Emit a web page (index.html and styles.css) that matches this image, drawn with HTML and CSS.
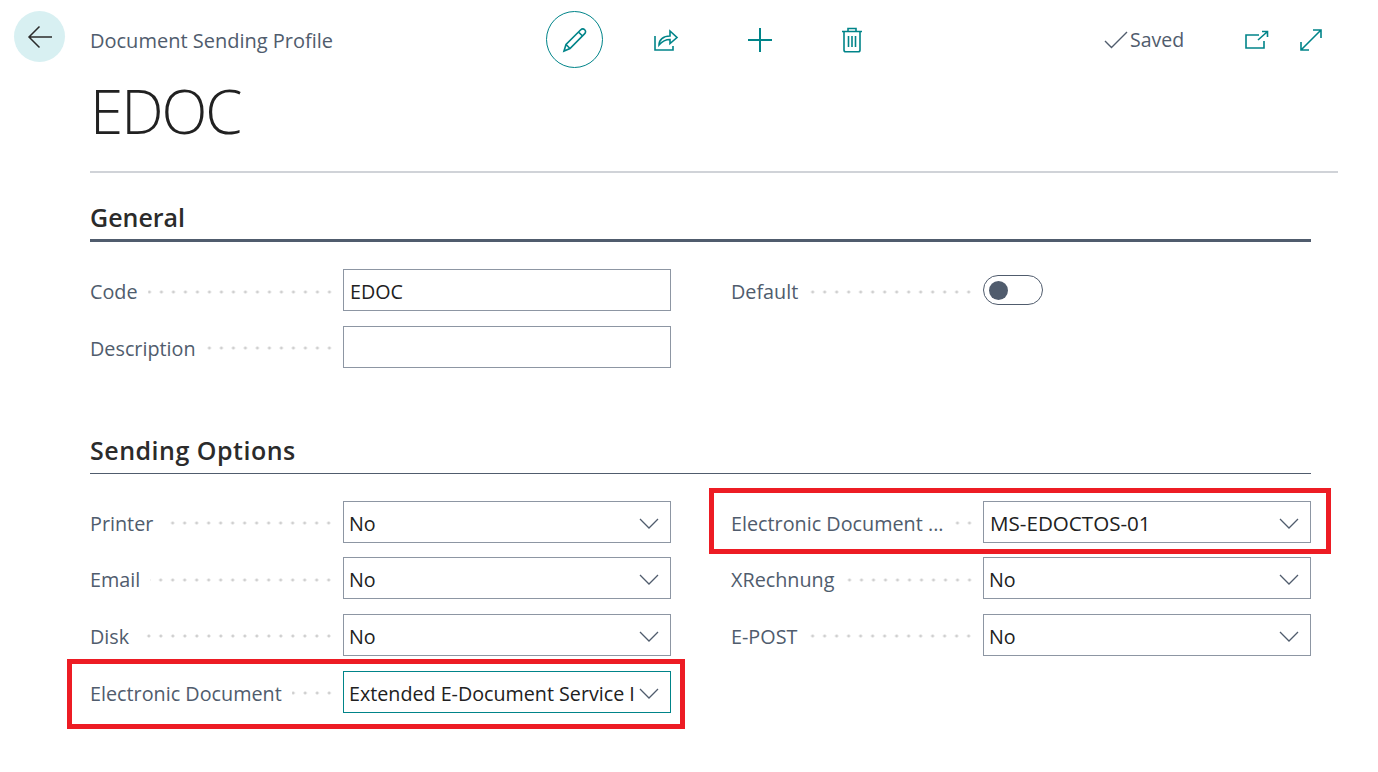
FILE: index.html
```html
<!DOCTYPE html>
<html lang="en">
<head>
    <meta charset="UTF-8">
    <title>Document Sending Profile</title>
    <link rel="stylesheet" href="styles.css">
</head>
<body>

<header class="topbar">
    <button class="back-btn">
        <svg width="26" height="26" viewBox="0 0 26 26" fill="none" stroke="#2b2b2b" stroke-width="1.5"><path d="M25 13H2M12.500 2.500 2 13l10.500 10.500"/></svg>
    </button>
    <div class="crumb">Document Sending Profile</div>
    <div class="actions">
        <button class="icon-btn edit-btn">
            <svg width="26" height="26" viewBox="0 0 26 26" fill="none" stroke="#008489" stroke-width="1.6"><path d="M2 24l2-6.500L18.500 3c1.500-1.500 3-1.500 4.200-.3s1.200 2.800-.2 4.200L8 21.500zM4 17.500 8 21.500M16.500 5l4.500 4.500"/></svg>
        </button>
        <button class="icon-btn share-btn">
            <svg width="26" height="24" viewBox="0 0 26 24" fill="none" stroke="#008489" stroke-width="1.6"><path d="M2 8v14h18v-4"/><path d="M6 17c0-5 4-9 11-9V3l7 6.500-7 6v-4c-5 0-8 2-11 5.500z"/></svg>
        </button>
        <button class="icon-btn add-btn">
            <svg width="26" height="26" viewBox="0 0 26 26" stroke="#008489" stroke-width="2"><path d="M13 1v24M1 13h24"/></svg>
        </button>
        <button class="icon-btn delete-btn">
            <svg width="22" height="26" viewBox="0 0 22 26" fill="none" stroke="#008489" stroke-width="1.6"><path d="M1 4.500h20M7 4.500V1.500h8v3M3 4.500V23c0 1 .8 1.800 1.800 1.800h12.400c1 0 1.800-.8 1.800-1.800V4.500M7.500 9v11M11 9v11M14.500 9v11"/></svg>
        </button>
    </div>
    <div class="status">
        <svg width="24" height="18" viewBox="0 0 24 18" fill="none" stroke="#505c6d" stroke-width="1.4"><path d="M1 10l6.500 6.500L23 1"/></svg>
        <span>Saved</span>
    </div>
    <button class="icon-btn open-btn">
        <svg width="24" height="20" viewBox="0 0 24 20" fill="none" stroke="#008489" stroke-width="1.6"><path d="M14 5H1v13h18v-7M13 10l9-8M17 1.500h5.500V7"/></svg>
    </button>
    <button class="icon-btn expand-btn">
        <svg width="24" height="24" viewBox="0 0 24 24" fill="none" stroke="#008489" stroke-width="1.6"><path d="M2 22 22 2M14 2h8v8M2 14v8h8"/></svg>
    </button>
</header>

<main class="page">
    <h1>EDOC</h1>

    <section class="group first-group">
        <h2>General</h2>
        <div class="fields">
            <div class="field">
                <label>Code</label><span class="dots"></span>
                <div class="box pad-text">EDOC</div>
            </div>
            <div class="field">
                <label>Default</label><span class="dots"></span>
                <div class="toggle-wrap"><span class="toggle"><span class="knob"></span></span></div>
            </div>
            <div class="field">
                <label>Description</label><span class="dots"></span>
                <div class="box pad-text"></div>
            </div>
        </div>
    </section>

    <section class="group second-group">
        <h2>Sending Options</h2>
        <div class="fields">
            <div class="field">
                <label>Printer</label><span class="dots"></span>
                <div class="box select">No<svg class="chev" viewBox="0 0 20 11"><path d="M1 1l9 9 9-9"/></svg></div>
            </div>
            <div class="field">
                <label>Electronic Document ...</label><span class="dots"></span>
                <div class="box select pad-text service-code">MS-EDOCTOS-01<svg class="chev" viewBox="0 0 20 11"><path d="M1 1l9 9 9-9"/></svg></div>
                <span class="redbox redbox-right"></span>
            </div>
            <div class="field">
                <label>Email</label><span class="dots"></span>
                <div class="box select">No<svg class="chev" viewBox="0 0 20 11"><path d="M1 1l9 9 9-9"/></svg></div>
            </div>
            <div class="field">
                <label>XRechnung</label><span class="dots"></span>
                <div class="box select">No<svg class="chev" viewBox="0 0 20 11"><path d="M1 1l9 9 9-9"/></svg></div>
            </div>
            <div class="field">
                <label>Disk</label><span class="dots"></span>
                <div class="box select">No<svg class="chev" viewBox="0 0 20 11"><path d="M1 1l9 9 9-9"/></svg></div>
            </div>
            <div class="field">
                <label>E-POST</label><span class="dots"></span>
                <div class="box select">No<svg class="chev" viewBox="0 0 20 11"><path d="M1 1l9 9 9-9"/></svg></div>
            </div>
            <div class="field">
                <label>Electronic Document</label><span class="dots"></span>
                <div class="box select focused">Extended E-Document Service I<svg class="chev" viewBox="0 0 20 11"><path d="M1 1l9 9 9-9"/></svg></div>
                <span class="redbox redbox-left"></span>
            </div>
        </div>
    </section>
</main>

</body>
</html>
```

FILE: styles.css
```css
body {
    font-family: "Open Sans", "Noto Sans", sans-serif;
    background-color: #fff;
    color: #212121;
    margin: 0;
    padding: 0;
    min-height: 772px;
}

button {
    background: none;
    border: none;
    padding: 0;
    display: flex;
    align-items: center;
    justify-content: center;
}

.topbar {
    display: flex;
    align-items: center;
    height: 79px;
    padding-left: 14px;
}

.back-btn {
    width: 51px;
    height: 51px;
    border-radius: 50%;
    background-color: #d8f0f2;
    margin-top: -6px;
    flex: none;
}

.crumb {
    width: 456px;
    margin-left: 25px;
    padding-top: 2px;
    font-size: 20px;
    color: #505c6d;
    flex: none;
}

.actions {
    display: flex;
    align-items: center;
    width: 345px;
    flex: none;
}

.icon-btn {
    flex: none;
}

.edit-btn {
    width: 57px;
    height: 57px;
    border: 1px solid #008489;
    border-radius: 50%;
}

.share-btn { margin-left: 50px; }
.add-btn { margin-left: 68px; }
.delete-btn { margin-left: 68px; }

.status {
    display: flex;
    align-items: center;
    gap: 2px;
    width: 137px;
    margin-left: 213px;
    font-size: 19.500px;
    color: #505c6d;
    flex: none;
}

.open-btn { margin-left: 4px; }
.expand-btn { margin-left: 30px; }

.page {
    margin-left: 90px;
    width: 1248px;
}

h1 {
    font-size: 60px;
    font-weight: 300;
    line-height: 64px;
    letter-spacing: -2px;
    margin: 0;
    height: 92px;
    border-bottom: 2px solid #d0d3d8;
}

.group {
    width: 1221px;
}

.first-group {
    margin-top: 26px;
}

.second-group {
    margin-top: 64px;
}

h2 {
    font-size: 25px;
    font-weight: 600;
    line-height: 36px;
    margin: 0 0 27px;
    padding-bottom: 5px;
    color: #2b2b2b;
    border-bottom: 1px solid #505c6d;
}

.first-group h2 {
    padding-bottom: 4px;
    border-bottom: 3px solid #505c6d;
}

.second-group h2 {
    letter-spacing: .5px;
}

.fields {
    display: grid;
    grid-template-columns: 581px 580px;
    column-gap: 60px;
    row-gap: 14.670px;
}

.field {
    display: flex;
    align-items: center;
    height: 42px;
    position: relative;
}

label {
    font-size: 19.800px;
    padding-top: 3px;
    color: #505c6d;
    white-space: nowrap;
}

.dots {
    flex: 1;
    height: 4px;
    margin: 3px 8px 0 10px;
    background-image: radial-gradient(circle, #cfcfcf 1.400px, transparent 1.700px);
    background-size: 12px 4px;
    background-position: right center;
    background-repeat: repeat-x;
}

.box {
    width: 328px;
    height: 42px;
    box-sizing: border-box;
    border: 1px solid #8d96a3;
    display: flex;
    align-items: center;
    padding-left: 5px;
    padding-top: 3px;
    font-size: 19.700px;
    color: #212121;
    flex: none;
    white-space: nowrap;
}

.pad-text {
    padding-left: 6px;
}

.select {
    justify-content: space-between;
    padding-right: 11px;
}

.service-code {
    font-size: 20.600px;
}

.focused {
    border-color: #008489;
}

.chev {
    width: 20px;
    height: 11px;
    flex: none;
    fill: none;
    stroke: #505c6d;
    stroke-width: 1.300;
}

.toggle-wrap {
    width: 328px;
    flex: none;
}

.toggle {
    display: flex;
    align-items: center;
    width: 60px;
    height: 30px;
    box-sizing: border-box;
    border: 1px solid #505c6d;
    border-radius: 15px;
    padding-left: 5px;
}

.knob {
    width: 19px;
    height: 19px;
    border-radius: 50%;
    background-color: #505c6d;
}

/* red annotations drawn over the screenshot */
.redbox {
    position: absolute;
    border: 5px solid #ed1c24;
    box-sizing: border-box;
}

.redbox-left {
    left: -23px;
    right: -14px;
    top: -12px;
    height: 70px;
}

.redbox-right {
    left: -22px;
    right: -20px;
    top: -13px;
    height: 66px;
}
```
